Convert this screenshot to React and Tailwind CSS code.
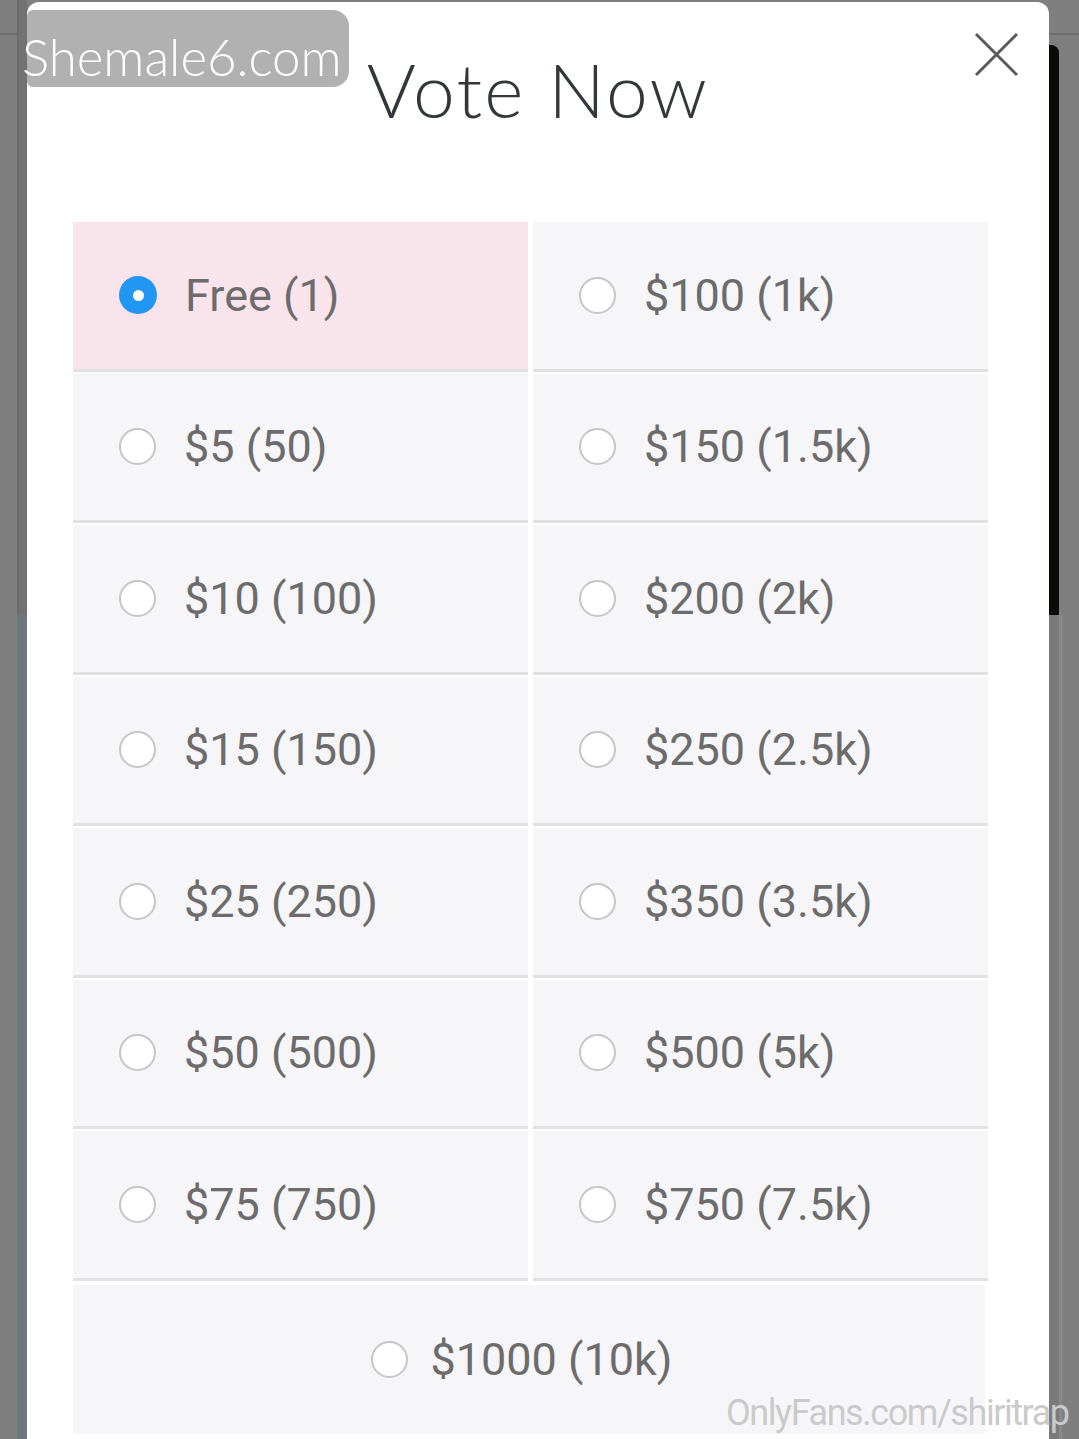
import React from "react";

const options = [
  ["Free (1)", "$100 (1k)"],
  ["$5 (50)", "$150 (1.5k)"],
  ["$10 (100)", "$200 (2k)"],
  ["$15 (150)", "$250 (2.5k)"],
  ["$25 (250)", "$350 (3.5k)"],
  ["$50 (500)", "$500 (5k)"],
  ["$75 (750)", "$750 (7.5k)"],
];

const Radio = ({ checked }) =>
  checked ? (
    <span className="w-[38px] h-[38px] rounded-full bg-[#2196f3] flex items-center justify-center shrink-0">
      <span className="w-[11px] h-[11px] rounded-full bg-white" />
    </span>
  ) : (
    <span className="w-[37px] h-[37px] rounded-full bg-white border-2 border-[#c6c6c6] shrink-0" />
  );

const Option = ({ label, checked, center }) => (
  <div
    className={`h-[149.5px] flex items-center ${
      center
        ? "justify-center gap-[22px] pr-[14px]"
        : "pl-[46px] gap-[28px] border-b-[3px] border-[#e1e1e3]"
    } ${checked ? "bg-[#fae4ec]" : "bg-[#f6f6f8]"}`}
  >
    <Radio checked={checked} />
    <span className="text-[45px] leading-none text-[#6c6c6c] font-['Roboto',sans-serif]">
      {label}
    </span>
  </div>
);

export default function App() {
  return (
    <div className="relative h-[1439px] w-[1079px] overflow-hidden bg-[#7f7f7f] flex">
      {/* left backdrop */}
      <div className="w-[27px] flex shrink-0">
        <div className="w-[17px] bg-[#7e7e7e] pt-[33px]">
          <div className="h-[2px] bg-[#6d6d6d]" />
        </div>
        <div className="w-[10px] flex flex-col">
          <div className="h-[615px] bg-[#727272] border-l-2 border-[#6a6a6a]" />
          <div className="flex-1 bg-[#6a777b]" />
        </div>
      </div>

      {/* modal */}
      <div className="relative w-[1022px] shrink-0 mt-[2px] bg-white rounded-t-[12px] pl-[46px] pr-[61px] pt-[50px]">
        <h1 className="text-center text-[75px] leading-none font-light tracking-[0.03em] text-[#33373b] font-['Lato',sans-serif] pl-[15px]">
          Vote Now
        </h1>
        <button className="absolute right-[30px] top-[30px] w-[45px] h-[45px]">
          <svg viewBox="0 0 45 45" className="w-full h-full">
            <path d="M2 2 L43 43 M43 2 L2 43" stroke="#5a5a5a" strokeWidth="3" />
          </svg>
        </button>

        <div className="mt-[95px] flex flex-col gap-y-[2px]">
          {options.map(([a, b], i) => (
            <div key={i} className="grid grid-cols-2 gap-x-[5px]">
              <Option label={a} checked={i === 0} />
              <Option label={b} />
            </div>
          ))}
          <div className="pr-[3px] pt-[2px]">
            <Option label="$1000 (10k)" center />
          </div>
        </div>
      </div>

      {/* right backdrop */}
      <div className="flex-1 flex flex-col">
        <div className="h-[45px] pt-[33px]">
          <div className="h-[2px] bg-[#6d6d6d]" />
        </div>
        <div className="h-[570px] flex">
          <div className="w-[10px] bg-[#0c0a08] rounded-tr-[8px]" />
          <div className="flex-1 bg-[#7f7f7f]" />
        </div>
        <div className="flex-1 flex">
          <div className="w-[10px] bg-[#7a7a7a]" />
          <div className="w-[3px] bg-[#888888]" />
          <div className="flex-1 bg-[#7f7f7f]" />
        </div>
      </div>

      {/* watermarks */}
      <div className="absolute left-[27px] top-[10px] w-[322px] h-[77px] bg-[#b1b1b1] rounded-r-[16px] rounded-l-[6px]" />
      <div className="absolute left-[22px] top-[31px] text-[51px] leading-none font-light text-white font-['Lato',sans-serif]">
        Shemale6.com
      </div>
      <div className="absolute left-[726px] top-[1395px] text-[36px] leading-none tracking-[-0.04em] text-[#cacaca] font-['Roboto',sans-serif]">
        OnlyFans.com/shiritrap
      </div>
    </div>
  );
}
